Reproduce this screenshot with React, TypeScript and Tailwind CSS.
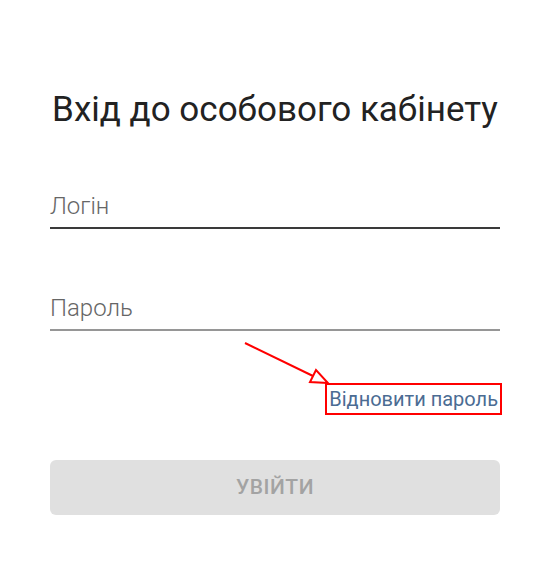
import React from 'react';

const font = { fontFamily: 'Roboto, "Noto Sans", sans-serif' };

const Field = ({ label, lineClass }: { label: string; lineClass: string }) => (
  <div className={`border-b-2 ${lineClass} pb-[6px]`}>
    <div className="text-[24px] leading-[30px] font-light text-[#666]">{label}</div>
  </div>
);

const App = () => {
  return (
    <div className="relative min-h-[579px] w-full bg-white" style={font}>
      <div className="mx-auto w-[450px] pt-[86px]">
        <h1 className="text-center text-[35px] leading-[48px] font-normal text-[#222]">
          Вхід до особового кабінету
        </h1>
        <div className="mt-[57px]">
          <Field label="Логін" lineClass="border-[#3a3a3a]" />
        </div>
        <div className="mt-[64px]">
          <Field label="Пароль" lineClass="border-[#969696]" />
        </div>
        <div className="-mr-[2px] mt-[52px] flex justify-end">
          <a className="border-2 border-[#f00] pl-[2px] pr-[2px] pt-[1px] text-[20px] leading-[27px] text-[#4b6c93]">
            Відновити пароль
          </a>
        </div>
        <button className="mt-[45px] h-[55px] w-full rounded-md bg-[#e0e0e0] text-[21px] font-medium tracking-wide text-[#a3a3a3]">
          УВІЙТИ
        </button>
      </div>
      <svg className="absolute left-0 top-0" width="550" height="579" viewBox="0 0 550 579">
        <line x1="245" y1="343" x2="313" y2="376" stroke="#f00" strokeWidth="2" />
        <polygon points="328,383 310,382 316,370" fill="white" stroke="#f00" strokeWidth="2" />
      </svg>
    </div>
  );
};

export default App;
